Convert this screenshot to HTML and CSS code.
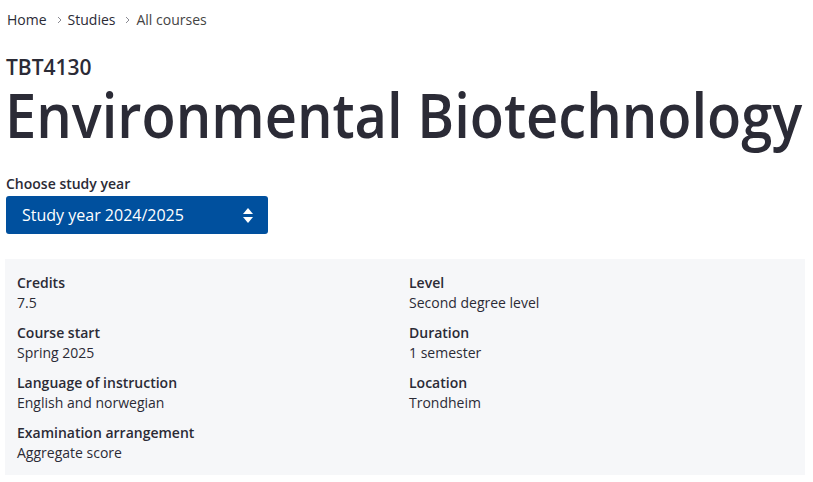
FILE: index.html
```html
<!DOCTYPE html>
<html lang="en">
<head>
    <meta charset="UTF-8">
    <meta name="viewport" content="width=device-width, initial-scale=1.0">
    <title>TBT4130 - Environmental Biotechnology</title>
    <link rel="stylesheet" href="styles.css">
</head>
<body>
    <main class="page">
        <nav class="breadcrumb">
            <a href="#">Home</a>
            <svg class="sep" width="5" height="8" viewBox="0 0 5 8"><path d="M1 1 L4 4 L1 7" fill="none" stroke="#8a8a92" stroke-width="1"/></svg>
            <a href="#">Studies</a>
            <svg class="sep" width="5" height="8" viewBox="0 0 5 8"><path d="M1 1 L4 4 L1 7" fill="none" stroke="#8a8a92" stroke-width="1"/></svg>
            <span class="current">All courses</span>
        </nav>

        <div class="course-code">TBT4130</div>
        <h1 class="course-title">Environmental Biotechnology</h1>

        <label class="year-label" for="year">Choose study year</label>
        <div class="year-select" id="year">
            <span>Study year 2024/2025</span>
            <svg class="arrows" width="10" height="15" viewBox="0 0 10 15">
                <path d="M5 0 L10 6 L0 6 Z" fill="#fff"/>
                <path d="M0 9 L10 9 L5 15 Z" fill="#fff"/>
            </svg>
        </div>

        <!-- fakta om emnet -->
        <section class="facts">
            <div class="fact">
                <div class="fact-label">Credits</div>
                <div class="fact-value">7.5</div>
            </div>
            <div class="fact">
                <div class="fact-label">Level</div>
                <div class="fact-value">Second degree level</div>
            </div>
            <div class="fact">
                <div class="fact-label">Course start</div>
                <div class="fact-value">Spring 2025</div>
            </div>
            <div class="fact">
                <div class="fact-label">Duration</div>
                <div class="fact-value">1 semester</div>
            </div>
            <div class="fact">
                <div class="fact-label">Language of instruction</div>
                <div class="fact-value">English and norwegian</div>
            </div>
            <div class="fact">
                <div class="fact-label">Location</div>
                <div class="fact-value">Trondheim</div>
            </div>
            <div class="fact">
                <div class="fact-label">Examination arrangement</div>
                <div class="fact-value">Aggregate score</div>
            </div>
        </section>
    </main>
</body>
</html>
```

FILE: styles.css
```css
* {
    margin: 0;
    padding: 0;
    box-sizing: border-box;
}

body {
    background: #fff;
    color: #2b2b36;
    font-family: "Open Sans", Arial, sans-serif;
}

.page {
    width: 800px;
    margin-left: 5px;
    padding-top: 10px;
}

.breadcrumb {
    display: flex;
    align-items: center;
    font-size: 14px;
    line-height: 20px;
    padding-left: 2px;
}

.breadcrumb a {
    color: #2b2b36;
    text-decoration: none;
}

.breadcrumb .sep {
    margin: 0 6px 0 10px;
}

.breadcrumb .current {
    color: #444;
}

.course-code {
    margin-top: 24px;
    padding-left: 1px;
    font-size: 21px;
    line-height: 26px;
    font-weight: 600;
}

/* Open Sans is wider than the original title face, so squeeze it */
.course-title {
    font-size: 62px;
    line-height: 68px;
    font-weight: 600;
    white-space: nowrap;
    transform: scaleX(0.903);
    transform-origin: left center;
    margin-bottom: 26px;
}

.year-label {
    display: block;
    padding-left: 1px;
    font-size: 14px;
    line-height: 20px;
    font-weight: 600;
}

.year-select {
    width: 262px;
    height: 38px;
    margin: 2px 0 25px 1px;
    padding: 0 15px 0 16px;
    display: flex;
    align-items: center;
    justify-content: space-between;
    background: #00509e;
    color: #fff;
    border-radius: 3px;
    font-size: 16px;
}

.facts {
    display: grid;
    grid-template-columns: 392px 1fr;
    row-gap: 10px;
    background: #f6f7f9;
    padding: 14px 12px 12px 12px;
}

.fact {
    font-size: 14px;
    line-height: 20px;
}

.fact-label {
    font-weight: 600;
}
```
